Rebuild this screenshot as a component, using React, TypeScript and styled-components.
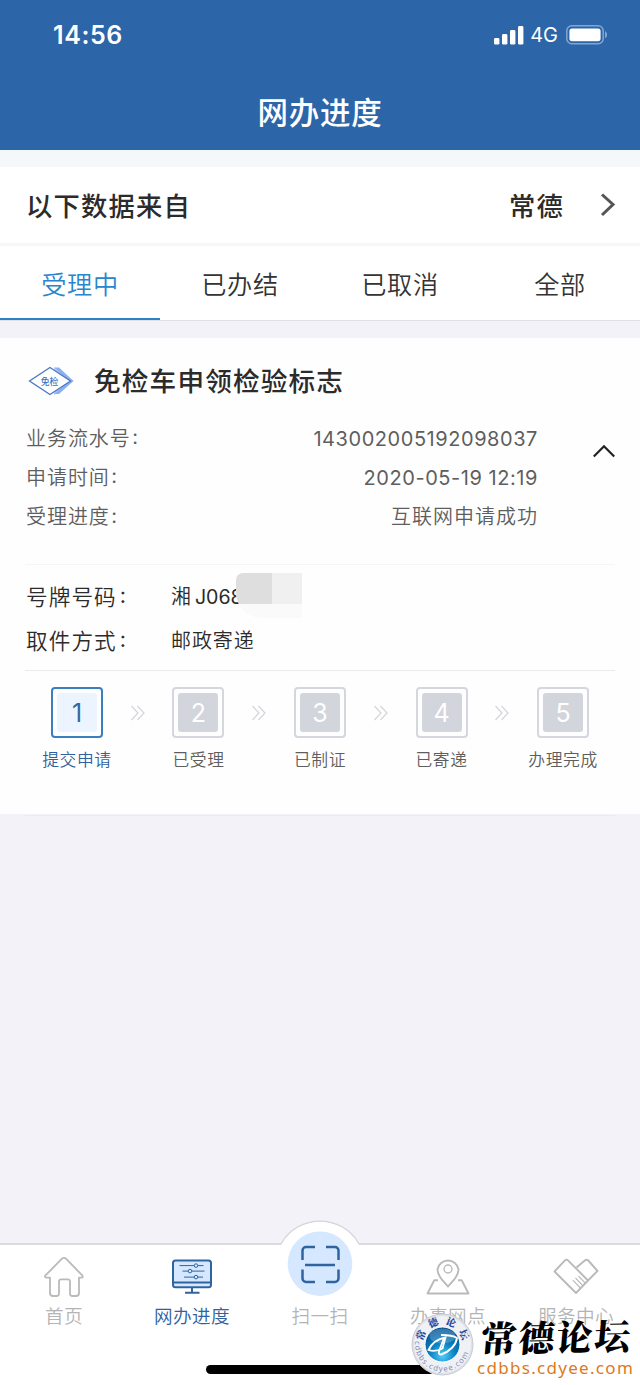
import React from "react";
import styled, { createGlobalStyle } from "styled-components";

const GlobalStyle = createGlobalStyle`
  *, *::before, *::after { box-sizing: border-box; }
  body {
    margin: 0;
    background: #f2f2f8;
    font-family: Inter, "Noto Sans CJK SC", sans-serif;
    font-weight: 350;
    color: #333;
  }
`;

const Page = styled.div`
  width: 640px;
  height: 1385px;
  display: flex;
  flex-direction: column;
  background: #f2f2f8;
  overflow: hidden;
  position: relative;
`;

const Header = styled.header`
  height: 150px;
  flex: none;
  background: #2c65a8;
  color: #fff;
`;

const StatusBar = styled.div`
  height: 70px;
  padding: 0 32px 0 53px;
  display: flex;
  align-items: center;
  justify-content: space-between;
`;

const Clock = styled.span`
  font-size: 25px;
  font-weight: 600;
  letter-spacing: 0.6px;
`;

const StatusIcons = styled.div`
  display: flex;
  align-items: center;
  gap: 8px;
  font-size: 20px;
  font-weight: 400;
  svg:first-child { margin-right: -1.5px; }
`;

const Title = styled.h1`
  margin: 0;
  height: 84px;
  line-height: 86px;
  text-align: center;
  font-size: 30.5px;
  font-weight: 500;
  letter-spacing: 0.8px;
`;

const SourceRow = styled.section`
  height: 96px;
  flex: none;
  border-top: 17px solid #f4f8fb;
  border-bottom: 3px solid #f7f7f8;
  background: #fff;
  padding: 0 24px 0 26px;
  display: flex;
  align-items: center;
  font-size: 26.3px;
  font-weight: 500;
  letter-spacing: 1.2px;
  color: #2b2b2b;
  span { margin-top: -2px; }
`;

const City = styled.span`
  margin-left: auto;
  margin-right: 36px;
`;

const Tabs = styled.nav`
  height: 75px;
  flex: none;
  display: flex;
  background: #fff;
  border-bottom: 1px solid #e0e0e6;
`;

const Tab = styled.div<{ $active?: boolean }>`
  flex: 1;
  height: 74px;
  line-height: 78px;
  text-align: center;
  font-size: 25.2px;
  letter-spacing: 0.6px;
  color: ${(p) => (p.$active ? "#2a86cc" : "#333")};
  border-bottom: ${(p) => (p.$active ? "2px solid #2c80c4" : "0")};
`;

const Card = styled.article`
  margin-top: 17px;
  height: 476px;
  flex: none;
  background: #fefefe;
  display: flex;
  flex-direction: column;
`;

const CardTitle = styled.div`
  height: 80px;
  padding: 6px 0 0 28px;
  display: flex;
  align-items: center;
  gap: 20px;
  font-size: 26.6px;
  font-weight: 500;
  letter-spacing: 1.2px;
  color: #2b2b2b;
  span { margin-top: -3px; }
`;

const Summary = styled.div`
  height: 146px;
  padding: 0 24px 0 26px;
  display: flex;
  align-items: flex-start;
`;

const SummaryRows = styled.dl`
  margin: 1.5px 0 0;
  width: 512px;
`;

const SummaryRow = styled.div<{ $numeric?: boolean }>`
  height: 39.4px;
  line-height: 39.4px;
  display: flex;
  justify-content: space-between;
  font-size: 20px;
  letter-spacing: 0.95px;
  color: #5e5e5e;
  dt, dd { margin: 0; }
  dt::after { content: ":"; margin-left: 1.5px; font-weight: 400; position: relative; top: -1.5px; }
  dd {
    font-weight: ${(p) => (p.$numeric ? 400 : 350)};
    letter-spacing: ${(p) => (p.$numeric ? "0.55px" : "1px")};
  }
`;

const Toggle = styled.div`
  margin: 26px 0 0 auto;
  height: 16px;
  display: flex;
`;

const Details = styled.dl`
  margin: 0 25px;
  height: 107px;
  border-top: 1px solid #f5f5f7;
  border-bottom: 1px solid #ebebed;
  padding-top: 10px;
`;

const DetailRow = styled.div`
  height: 44px;
  line-height: 44px;
  display: flex;
  color: #2b2b2b;
  dt {
    width: 146px;
    padding-left: 1px;
    font-size: 21.6px;
    letter-spacing: 1.1px;
  }
  dt::after { content: ":"; margin-left: 3px; font-weight: 400; position: relative; top: -2px; }
  dd {
    margin: 0;
    position: relative;
    font-size: 20px;
    letter-spacing: 0.9px;
  }
`;

const PlateDigits = styled.span`
  margin-left: 3px;
  font-weight: 400;
  font-size: 19.6px;
  letter-spacing: 0;
`;

const Redaction = styled.span`
  position: absolute;
  left: 65px;
  top: -2px;
  width: 66px;
  height: 45px;
  overflow: hidden;
  border-radius: 7px 0 0 26px;
  display: grid;
  grid-template: 31px 14px / 36px 30px;
  background: #fafafa;
  i:nth-child(1) { background: #dedede; }
  i:nth-child(2) { background: #f0f0f0; }
`;

const Steps = styled.ol`
  list-style: none;
  margin: 16px 0 0;
  padding: 0 26px;
  display: flex;
`;

const Step = styled.li<{ $active?: boolean }>`
  width: 102px;
  display: flex;
  flex-direction: column;
  align-items: center;
  font-size: 16.8px;
  letter-spacing: 0.6px;
  line-height: 24px;
  color: ${(p) => (p.$active ? "#2f629f" : "#5e5e5e")};
`;

const StepBox = styled.div<{ $active?: boolean }>`
  width: 52px;
  height: 51px;
  margin-bottom: 10px;
  padding: 4px;
  border-radius: 4px;
  border: ${(p) => (p.$active ? "2px solid #3a7fc0" : "2px solid #d5d7de")};
  display: flex;
`;

const StepNumber = styled.span<{ $active?: boolean }>`
  flex: 1;
  border-radius: 3px;
  display: flex;
  align-items: center;
  justify-content: center;
  letter-spacing: 0;
  font-size: 25px;
  font-weight: 400;
  background: ${(p) => (p.$active ? "#ebf4ff" : "#d2d5dc")};
  color: ${(p) => (p.$active ? "#35699f" : "#fff")};
`;

const StepArrow = styled.li`
  width: 19.6px;
  height: 51px;
  display: flex;
  align-items: center;
  justify-content: center;
  svg { flex: none; }
`;

const CardEnd = styled.div`
  margin: 1px 25px 0;
  height: 1px;
  flex: none;
  background: #ebebee;
`;

const TabBar = styled.footer`
  margin-top: auto;
  height: 142px;
  flex: none;
  background: #fff;
  border-top: 2px solid #dbdbde;
  display: flex;
  position: relative;
`;

const Bump = styled.svg`
  position: absolute;
  left: 270px;
  top: -25px;
`;

const BarItem = styled.div<{ $active?: boolean }>`
  flex: 1;
  position: relative;
  display: flex;
  flex-direction: column;
  align-items: center;
  padding-top: 11px;
  font-size: 18.6px;
  line-height: 28px;
  letter-spacing: 0.4px;
  color: ${(p) => (p.$active ? "#2f629f" : "#b4b4b4")};
  svg { flex: none; height: 42px; margin-bottom: 4px; }
`;

const HomeIndicator = styled.div`
  position: absolute;
  left: 206px;
  top: 1364.5px;
  width: 228px;
  height: 9px;
  border-radius: 5px;
  background: #000;
`;

const Watermark = styled.div`
  position: absolute;
  left: 411px;
  top: 1312px;
  display: flex;
`;

const WatermarkText = styled.div`
  margin-left: 1px;
  width: 160px;
  display: flex;
  flex-direction: column;
`;

const WatermarkName = styled.span`
  font-family: "Noto Serif CJK SC", "Noto Sans CJK SC", serif;
  font-size: 36px;
  font-weight: 900;
  line-height: 47px;
  letter-spacing: 1.8px;
  color: #000;
  transform: skew(-5deg, -1deg);
  white-space: nowrap;
  margin-left: 5px;
`;

const WatermarkUrl = styled.span`
  font-family: "Noto Sans", sans-serif;
  font-size: 17px;
  font-weight: 400;
  line-height: 20px;
  letter-spacing: 1.3px;
  color: #dc7a1c;
  white-space: nowrap;
  margin: -1px 0 0 1px;
`;

const Signal = () => (
  <svg width="30" height="19" viewBox="0 0 30 19" fill="#fff">
    <rect x="0" y="12" width="5.4" height="6.6" rx="1.4" />
    <rect x="8" y="8" width="5.4" height="10.6" rx="1.4" />
    <rect x="16" y="4" width="5.4" height="14.6" rx="1.4" />
    <rect x="24" y="0" width="5.4" height="18.6" rx="1.4" />
  </svg>
);

const Battery = () => (
  <svg width="42" height="20" viewBox="0 0 42 20">
    <rect x="0.8" y="0.8" width="36.4" height="18" rx="5" fill="none" stroke="#83a6d0" strokeWidth="1.5" />
    <rect x="3.4" y="3.4" width="31.2" height="12.8" rx="2.6" fill="#fff" />
    <path d="M39 6.3c2.8 1.2 2.8 5.8 0 7z" fill="#83a6d0" />
  </svg>
);

const ChevronRight = () => (
  <svg width="16" height="24" viewBox="0 0 16 24" fill="none" stroke="#555" strokeWidth="3">
    <path d="M2 1.5 13 11.5 2 22" />
  </svg>
);

const ChevronUp = () => (
  <svg width="24" height="14" viewBox="0 0 24 14" fill="none" stroke="#222" strokeWidth="2.2">
    <path d="M1.8 12.6 12 2.2l10.2 10.4" />
  </svg>
);

const DoubleArrow = () => (
  <svg width="16" height="16" viewBox="0 0 16 16" fill="none" stroke="#d3d5da" strokeWidth="1.2">
    <path d="M1.5 1 8 8l-6.5 7M7.5 1 14 8l-6.5 7" />
  </svg>
);

const ExemptBadge = () => (
  <svg width="46" height="30" viewBox="0 0 46 30">
    <path d="M26 1.5 45.5 15 26 29z" fill="#b9d0f6" />
    <path d="M26 1.5h5L45.5 15 31 28h-5l15-13z" fill="#8db1ee" />
    <path d="M22 1.5 42.5 15 22 28.5 1.5 15z" fill="#fff" stroke="#4a78c4" strokeWidth="1.3" />
    <text x="21.5" y="18.7" textAnchor="middle" fontSize="8.8" letterSpacing="0" fontWeight="500" fill="#3d70c0">免检</text>
  </svg>
);

const HomeIcon = () => (
  <svg width="42" height="42" viewBox="0 0 42 42" fill="none" stroke="#bababa" strokeWidth="1.8" strokeLinejoin="round">
    <path d="M19 2.700c1.300-1.100 2.700-1.100 4 0l16.200 16.700c1 1.200.4 2.300-1 2.300H36V37c0 2-1 3-3 3h-3.500c-1.700 0-2.500-.8-2.500-2.500V25.500c0-1.500-.7-2.200-2.200-2.200h-6.600c-1.500 0-2.200.7-2.200 2.200v12c0 1.700-.8 2.500-2.500 2.500H10c-2 0-3-1-3-3V21.700H3.500c-1.500 0-2-1.200-1-2.300z" />
  </svg>
);

const MonitorIcon = () => (
  <svg width="42" height="42" viewBox="0 0 42 42" fill="none" stroke="#2f649f">
    <rect x="2" y="4.600" width="38" height="26.600" rx="2.500" fill="#d5e8ff" strokeWidth="2" />
    <path d="M2 26.500h38M21 31v5.500M14 36.800h14.500" strokeWidth="2" />
    <g strokeWidth="1" fill="#d5e8ff">
      <path d="M8.500 9.600h24M11.500 15.100h22M13 21.100h19" />
      <circle cx="25" cy="9.600" r="1.800" />
      <circle cx="19" cy="15.100" r="1.800" />
      <circle cx="25" cy="21.100" r="1.800" />
    </g>
  </svg>
);

const PinIcon = () => (
  <svg width="44" height="42" viewBox="0 0 44 42" fill="none" stroke="#bababa" strokeWidth="1.900" strokeLinejoin="round">
    <path d="M12 24.300H8.300L1.500 37.500h41L35.700 24.300H32" />
    <path d="M22 30.500C16 24 11.500 19.500 11.500 13.200a10.700 10.700 0 0 1 21 0C32.500 19.500 28 24 22 30.500z" />
    <circle cx="22" cy="13" r="4" strokeWidth="1.300" />
  </svg>
);

const HandsIcon = () => (
  <svg width="46" height="42" viewBox="0 0 46 42" fill="none" stroke="#bababa" strokeWidth="1.900" strokeLinejoin="round">
    <path d="M1.500 15.500 12 4.300a2 2 0 0 1 3 0L35 24.500 23 37z" />
    <path d="m23.500 11.500 8.300-7a2.500 2.500 0 0 1 3.500 0L44.500 15 35 24.500" />
    <path d="m19.800 24.200 7.600 7.800M22.500 22l7.300 7.600M25.500 20l6.500 6.800" strokeWidth="1.100" />
  </svg>
);

const rim = [
  { char: "常", angle: -66 },
  { char: "德", angle: -23 },
  { char: "论", angle: 21 },
  { char: "坛", angle: 65 },
];

const ForumLogo = () => (
  <svg width="64" height="66" viewBox="0 0 64 66">
    <defs>
      <radialGradient id="orb" cx="50%" cy="82%" r="80%">
        <stop offset="0" stopColor="#4fcdf8" />
        <stop offset=".45" stopColor="#0b80c4" />
        <stop offset="1" stopColor="#04508f" />
      </radialGradient>
      <path id="lowerArc" d="M4.300 28A27.500 27.500 0 1 0 58.700 28" />
    </defs>
    <circle cx="31.500" cy="32.500" r="30.500" fill="#dfe1e6" stroke="#c9ccd2" strokeWidth="1" />
    <circle cx="31.500" cy="32.500" r="28.500" fill="#eff1f5" />
    <circle cx="31.500" cy="32.500" r="17.500" fill="url(#orb)" stroke="#fff" strokeWidth="1" />
    <ellipse cx="31.500" cy="24" rx="13" ry="7.500" fill="#fff" opacity=".2" />
    <path d="M17.500 38c3-6.500 9-11 17-12.500l-3 11c-4 2-9.500 3-14 1.500z" fill="none" stroke="#fff" strokeWidth="1.800" />
    <path d="M30 23c6 0 13 1 16 3-1 7-7 13.500-16 16.500-2 .3-2.500-1-2-3l5-13.500" fill="none" stroke="#fff" strokeWidth="1.900" />
    <g fontFamily="Noto Serif CJK SC, Noto Sans CJK SC" fontSize="10" fontWeight="900" fill="#22479b" textAnchor="middle">
      {rim.map(({ char, angle }) => (
        <text key={char} x="31.500" y="12.500" transform={`rotate(${angle} 31.500 32.500)`}>{char}</text>
      ))}
    </g>
    <text fontFamily="Noto Sans" fontSize="7.800" fontWeight="400" fill="#7c90c0" letterSpacing="1.200">
      <textPath href="#lowerArc" startOffset="1">cdbbs.cdyee.com</textPath>
    </text>
  </svg>
);

const tabs = ["受理中", "已办结", "已取消", "全部"];
const steps = ["提交申请", "已受理", "已制证", "已寄递", "办理完成"];
const summary = [
  { label: "业务流水号", value: "143002005192098037", numeric: true },
  { label: "申请时间", value: "2020-05-19 12:19", numeric: true },
  { label: "受理进度", value: "互联网申请成功", numeric: false },
];

export default function App() {
  return (
    <Page>
      <GlobalStyle />
      <Header>
        <StatusBar>
          <Clock>14:56</Clock>
          <StatusIcons>
            <Signal />
            <span>4G</span>
            <Battery />
          </StatusIcons>
        </StatusBar>
        <Title>网办进度</Title>
      </Header>
      <SourceRow>
        <span>以下数据来自</span>
        <City>常德</City>
        <ChevronRight />
      </SourceRow>
      <Tabs>
        {tabs.map((label, i) => (
          <Tab key={label} $active={i === 0}>{label}</Tab>
        ))}
      </Tabs>
      <Card>
        <CardTitle>
          <ExemptBadge />
          <span>免检车申领检验标志</span>
        </CardTitle>
        <Summary>
          <SummaryRows>
            {summary.map(({ label, value, numeric }) => (
              <SummaryRow key={label} $numeric={numeric}>
                <dt>{label}</dt>
                <dd>{value}</dd>
              </SummaryRow>
            ))}
          </SummaryRows>
          <Toggle><ChevronUp /></Toggle>
        </Summary>
        <Details>
          <DetailRow>
            <dt>号牌号码</dt>
            <dd>湘<PlateDigits>J068</PlateDigits><Redaction><i /><i /></Redaction></dd>
          </DetailRow>
          <DetailRow>
            <dt>取件方式</dt>
            <dd>邮政寄递</dd>
          </DetailRow>
        </Details>
        <Steps>
          {steps.map((label, i) => (
            <React.Fragment key={label}>
              {i > 0 && <StepArrow><DoubleArrow /></StepArrow>}
              <Step $active={i === 0}>
                <StepBox $active={i === 0}>
                  <StepNumber $active={i === 0}>{i + 1}</StepNumber>
                </StepBox>
                {label}
              </Step>
            </React.Fragment>
          ))}
        </Steps>
      </Card>
      <CardEnd />
      <TabBar>
        <Bump width="100" height="80" viewBox="0 0 100 80">
          <path d="M11 25C27-6 73-6 89 25V60H11z" fill="#fff" />
          <path d="M11 24C28-6.500 72-6.500 89 24" fill="none" stroke="#d4d4d8" strokeWidth="1.200" />
          <circle cx="50" cy="43.700" r="32.300" fill="#d6e8ff" />
          <path d="M45 27H36a3.500 3.500 0 0 0-3.500 3.500v9.500M56 27h9a3.500 3.500 0 0 1 3.500 3.500v9.500M45 62H36a3.500 3.500 0 0 1-3.500-3.500v-9M56 62h9a3.500 3.500 0 0 0 3.500-3.500v-9M35 45h30" fill="none" stroke="#2f649f" strokeWidth="2.500" />
        </Bump>
        <BarItem><HomeIcon />首页</BarItem>
        <BarItem $active><MonitorIcon />网办进度</BarItem>
        <BarItem><svg width="42" height="42" />扫一扫</BarItem>
        <BarItem><PinIcon />办事网点</BarItem>
        <BarItem><HandsIcon />服务中心</BarItem>
      </TabBar>
      <HomeIndicator />
      <Watermark>
        <ForumLogo />
        <WatermarkText>
          <WatermarkName>常德论坛</WatermarkName>
          <WatermarkUrl>cdbbs.cdyee.com</WatermarkUrl>
        </WatermarkText>
      </Watermark>
    </Page>
  );
}
